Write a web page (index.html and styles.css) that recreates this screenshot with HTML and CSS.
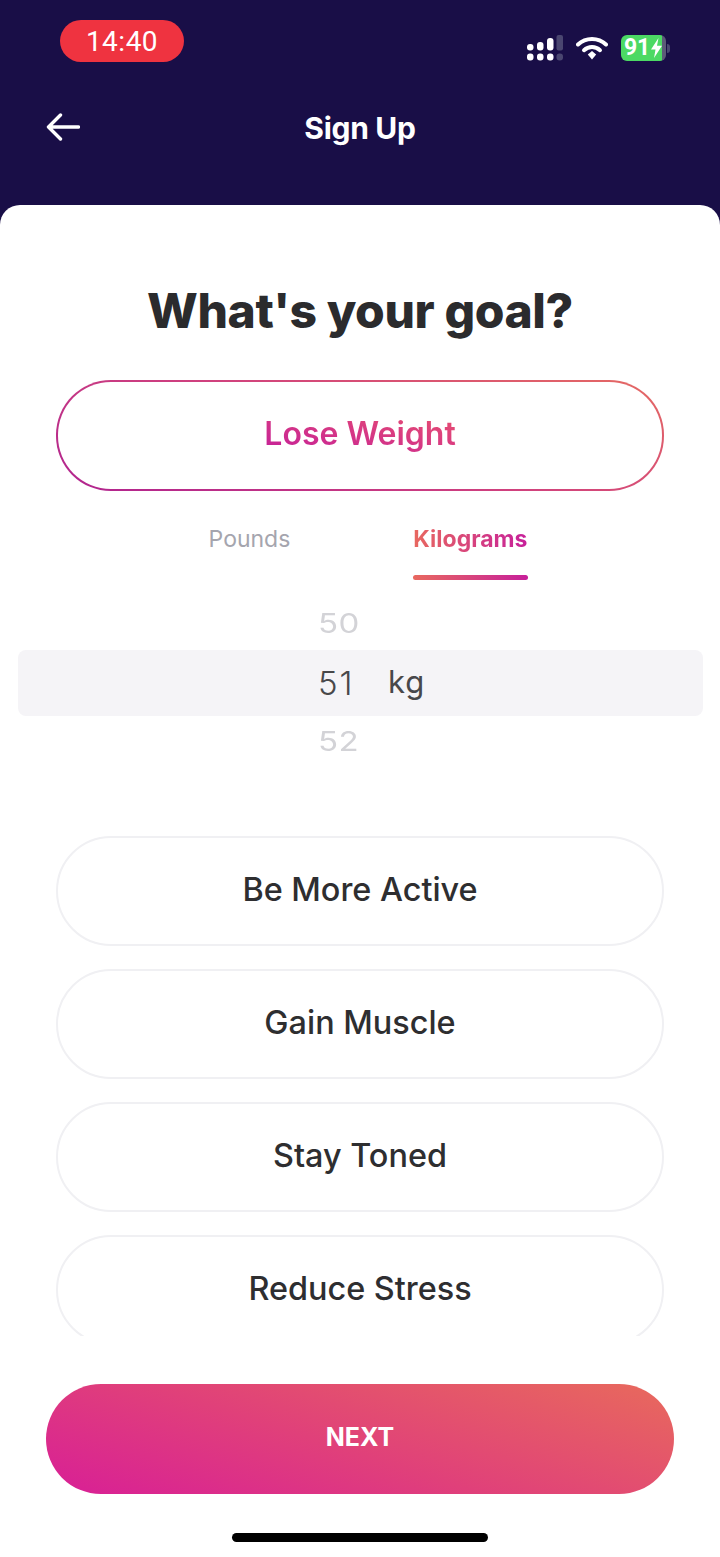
FILE: index.html
```html
<!DOCTYPE html>
<html lang="en">
<head>
    <meta charset="UTF-8">
    <meta name="viewport" content="width=device-width, initial-scale=1.0">
    <title>Sign Up</title>
    <link rel="stylesheet" href="styles.css">
</head>
<body>
    <div class="screen">
        <div class="top">
            <div class="status-bar">
                <div class="time">14:40</div>
                <div class="status-icons">
                    <svg class="signal" width="36" height="26" viewBox="0 0 36 26">
                        <g fill="#fff">
                            <rect x="0" y="9" width="6.5" height="6.5" rx="3"/>
                            <rect x="10" y="7" width="6.5" height="8.5" rx="3"/>
                            <rect x="20" y="3" width="6.5" height="12.5" rx="3"/>
                            <rect x="0" y="18.5" width="6.5" height="7" rx="3"/>
                            <rect x="10" y="18.5" width="6.5" height="7" rx="3"/>
                            <rect x="20" y="18.5" width="6.5" height="7" rx="3"/>
                        </g>
                        <g fill="#4a4670">
                            <rect x="29.5" y="0" width="6.5" height="15.5" rx="2"/>
                            <rect x="29.5" y="18.5" width="6.5" height="7" rx="3"/>
                        </g>
                    </svg>
                    <svg class="wifi" width="32" height="24" viewBox="0 0 32 24">
                        <path d="M2 8.5C9.8 1 22.2 1 30 8.5" fill="none" stroke="#fff" stroke-width="4" stroke-linecap="round"/>
                        <path d="M8 14.2C12.6 10 19.4 10 24 14.2" fill="none" stroke="#fff" stroke-width="4" stroke-linecap="round"/>
                        <path d="M11.8 18.6L16 14.9L20.2 18.6L16 23.4Z" fill="#fff"/>
                    </svg>
                    <div class="battery">
                        <div class="battery-body">
                            <span class="battery-level">91</span>
                            <svg class="bolt" width="11" height="20" viewBox="0 0 11 20">
                                <path d="M7.5 0L0 11.5H4.5L3 20L11 7.8H6Z" fill="#fff"/>
                            </svg>
                        </div>
                        <div class="battery-tip"></div>
                    </div>
                </div>
            </div>
            <div class="nav-bar">
                <svg class="back" width="34" height="28" viewBox="0 0 34 28">
                    <path d="M32.5 14H2.5M14.5 2L2.5 14L14.5 26" fill="none" stroke="#fff" stroke-width="3.4" stroke-linecap="round" stroke-linejoin="round"/>
                </svg>
                <h2>Sign Up</h2>
            </div>
        </div>

        <div class="sheet">
            <h1>What's your goal?</h1>
            <div class="goal selected"><span>Lose Weight</span></div>

            <div class="tabs">
                <div class="tab">Pounds</div>
                <div class="tab active"><span>Kilograms</span></div>
            </div>

            <div class="picker">
                <div class="picker-row faded top-row"><span>50</span></div>
                <div class="picker-row current"><span>51</span><span>kg</span></div>
                <div class="picker-row faded bottom-row"><span>52</span></div>
            </div>

            <div class="goal-list">
                <div class="goal">Be More Active</div>
                <div class="goal">Gain Muscle</div>
                <div class="goal">Stay Toned</div>
                <div class="goal">Reduce Stress</div>
            </div>

            <div class="next">NEXT</div>
            <div class="home-bar"></div>
        </div>
    </div>
</body>
</html>
```

FILE: styles.css
```css
html, body {
    margin: 0;
    padding: 0;
}
body {
    font-family: Inter, "Liberation Sans", sans-serif;
    background: #fff;
    color: #2c2c2e;
}
.screen {
    width: 720px;
    height: 1557px;
    overflow: hidden;
    background: #190e47;
    display: flex;
    flex-direction: column;
}
.top {
    height: 205px;
    flex: none;
}
.status-bar {
    display: flex;
    justify-content: space-between;
    padding: 20px 50px 0 60px;
    height: 62px;
    box-sizing: border-box;
}
.time {
    width: 124px;
    height: 42px;
    border-radius: 21px;
    background: #ef3340;
    color: #fff;
    font-family: Roboto, sans-serif;
    font-size: 28px;
    line-height: 43px;
    text-align: center;
    letter-spacing: 0.5px;
}
.status-icons {
    display: flex;
    align-items: flex-start;
    padding-top: 15px;
}
.signal {
    margin-right: 13px;
}
.wifi {
    margin-top: 1px;
    margin-right: 13px;
}
.battery {
    display: flex;
    align-items: center;
}
.battery-body {
    width: 45px;
    height: 26px;
    border-radius: 6px;
    background: linear-gradient(90deg, #4cd964 0%, #4cd964 91%, #5c5a78 91%);
    display: flex;
    align-items: center;
    padding-left: 3px;
    box-sizing: border-box;
    color: #fff;
}
.battery-level {
    font-family: Roboto, sans-serif;
    font-weight: 700;
    font-size: 23px;
    line-height: 26px;
    letter-spacing: -0.3px;
}
.bolt {
    margin-left: 1px;
}
.battery-tip {
    width: 3px;
    height: 9px;
    margin-left: 1px;
    border-radius: 0 3px 3px 0;
    background: #4a4670;
}
.nav-bar {
    position: relative;
    margin-top: 44px;
    height: 44px;
    display: flex;
    align-items: center;
    justify-content: center;
}
.back {
    position: absolute;
    left: 46px;
    top: 7px;
}
.nav-bar h2 {
    margin: 0;
    color: #fff;
    font-size: 30px;
    font-weight: 700;
    letter-spacing: -0.3px;
}
.sheet {
    flex: 1;
    background: #fff;
    border-radius: 20px 20px 0 0;
    display: flex;
    flex-direction: column;
    align-items: center;
}
.sheet h1 {
    margin: 76px 0 0;
    height: 60px;
    font-size: 48px;
    line-height: 60px;
    font-weight: 800;
    letter-spacing: -0.4px;
    color: #2b2b2d;
}
.goal {
    width: 608px;
    height: 110px;
    flex: none;
    box-sizing: border-box;
    border: 2px solid #f0f0f3;
    border-radius: 55px;
    background: #fff;
    padding-bottom: 4px;
    display: flex;
    align-items: center;
    justify-content: center;
    font-size: 32.4px;
    font-weight: 500;
    color: #2e2e30;
}
.goal.selected {
    margin-top: 39px;
    height: 111px;
    padding-bottom: 5px;
    font-size: 32px;
    font-weight: 600;
    border-color: transparent;
    background: linear-gradient(#fff, #fff) padding-box,
        linear-gradient(20deg, #b0238f 0%, #d0417e 50%, #e56a63 100%) border-box;
}
.goal.selected span {
    background: linear-gradient(12deg, #c41f9a 0%, #e8506f 100%);
    -webkit-background-clip: text;
    background-clip: text;
    color: transparent;
}
.tabs {
    width: 608px;
    height: 75px;
    flex: none;
    box-sizing: border-box;
    display: flex;
    justify-content: center;
    gap: 123px;
    margin-top: 30px;
    padding-left: 16px;
    font-size: 23px;
}
.tab {
    padding-top: 3px;
    line-height: 30px;
    color: #a5a5ae;
    text-align: center;
}
.tab.active {
    position: relative;
    height: 59px;
    font-weight: 700;
    box-sizing: border-box;
}
.tab.active span {
    background: linear-gradient(90deg, #e8685f, #c7209a);
    -webkit-background-clip: text;
    background-clip: text;
    color: transparent;
}
.tab.active::after {
    content: "";
    position: absolute;
    left: 0;
    right: -1px;
    bottom: 0;
    height: 5px;
    border-radius: 3px;
    background: linear-gradient(90deg, #e8685f, #c7209a);
}
.picker {
    width: 685px;
    margin-left: 1px;
    flex: none;
}
.picker-row {
    display: grid;
    grid-template-columns: 300px 70px 1fr;
    align-items: center;
    font-size: 31px;
}
.picker-row span:first-child {
    grid-column: 2;
}
.faded {
    color: #d3d3d7;
    font-size: 33px;
    letter-spacing: 0.5px;
}
.faded span {
    transform: scaleY(0.8);
}
.top-row {
    height: 54px;
}
.current {
    height: 66px;
    border-radius: 8px;
    background: #f5f4f7;
    color: #48484a;
    letter-spacing: 1px;
}
.current span:first-child {
    font-size: 33px;
    font-weight: 300;
    letter-spacing: 2px;
}
.current span:last-child {
    padding-bottom: 3px;
}
.bottom-row {
    height: 50px;
}
.goal-list {
    margin-top: 70px;
    height: 500px;
    flex: none;
    overflow: hidden;
    display: flex;
    flex-direction: column;
    gap: 23px;
}
.next {
    margin-top: 48px;
    width: 628px;
    height: 110px;
    flex: none;
    box-sizing: border-box;
    padding-bottom: 4px;
    border-radius: 55px;
    background: linear-gradient(18deg, #d81f96 0%, #e0407a 45%, #e86a5c 100%);
    color: #fff;
    font-size: 25px;
    font-weight: 700;
    display: flex;
    align-items: center;
    justify-content: center;
}
.home-bar {
    margin-top: 39px;
    width: 256px;
    height: 9px;
    flex: none;
    border-radius: 5px;
    background: #000;
}
```
